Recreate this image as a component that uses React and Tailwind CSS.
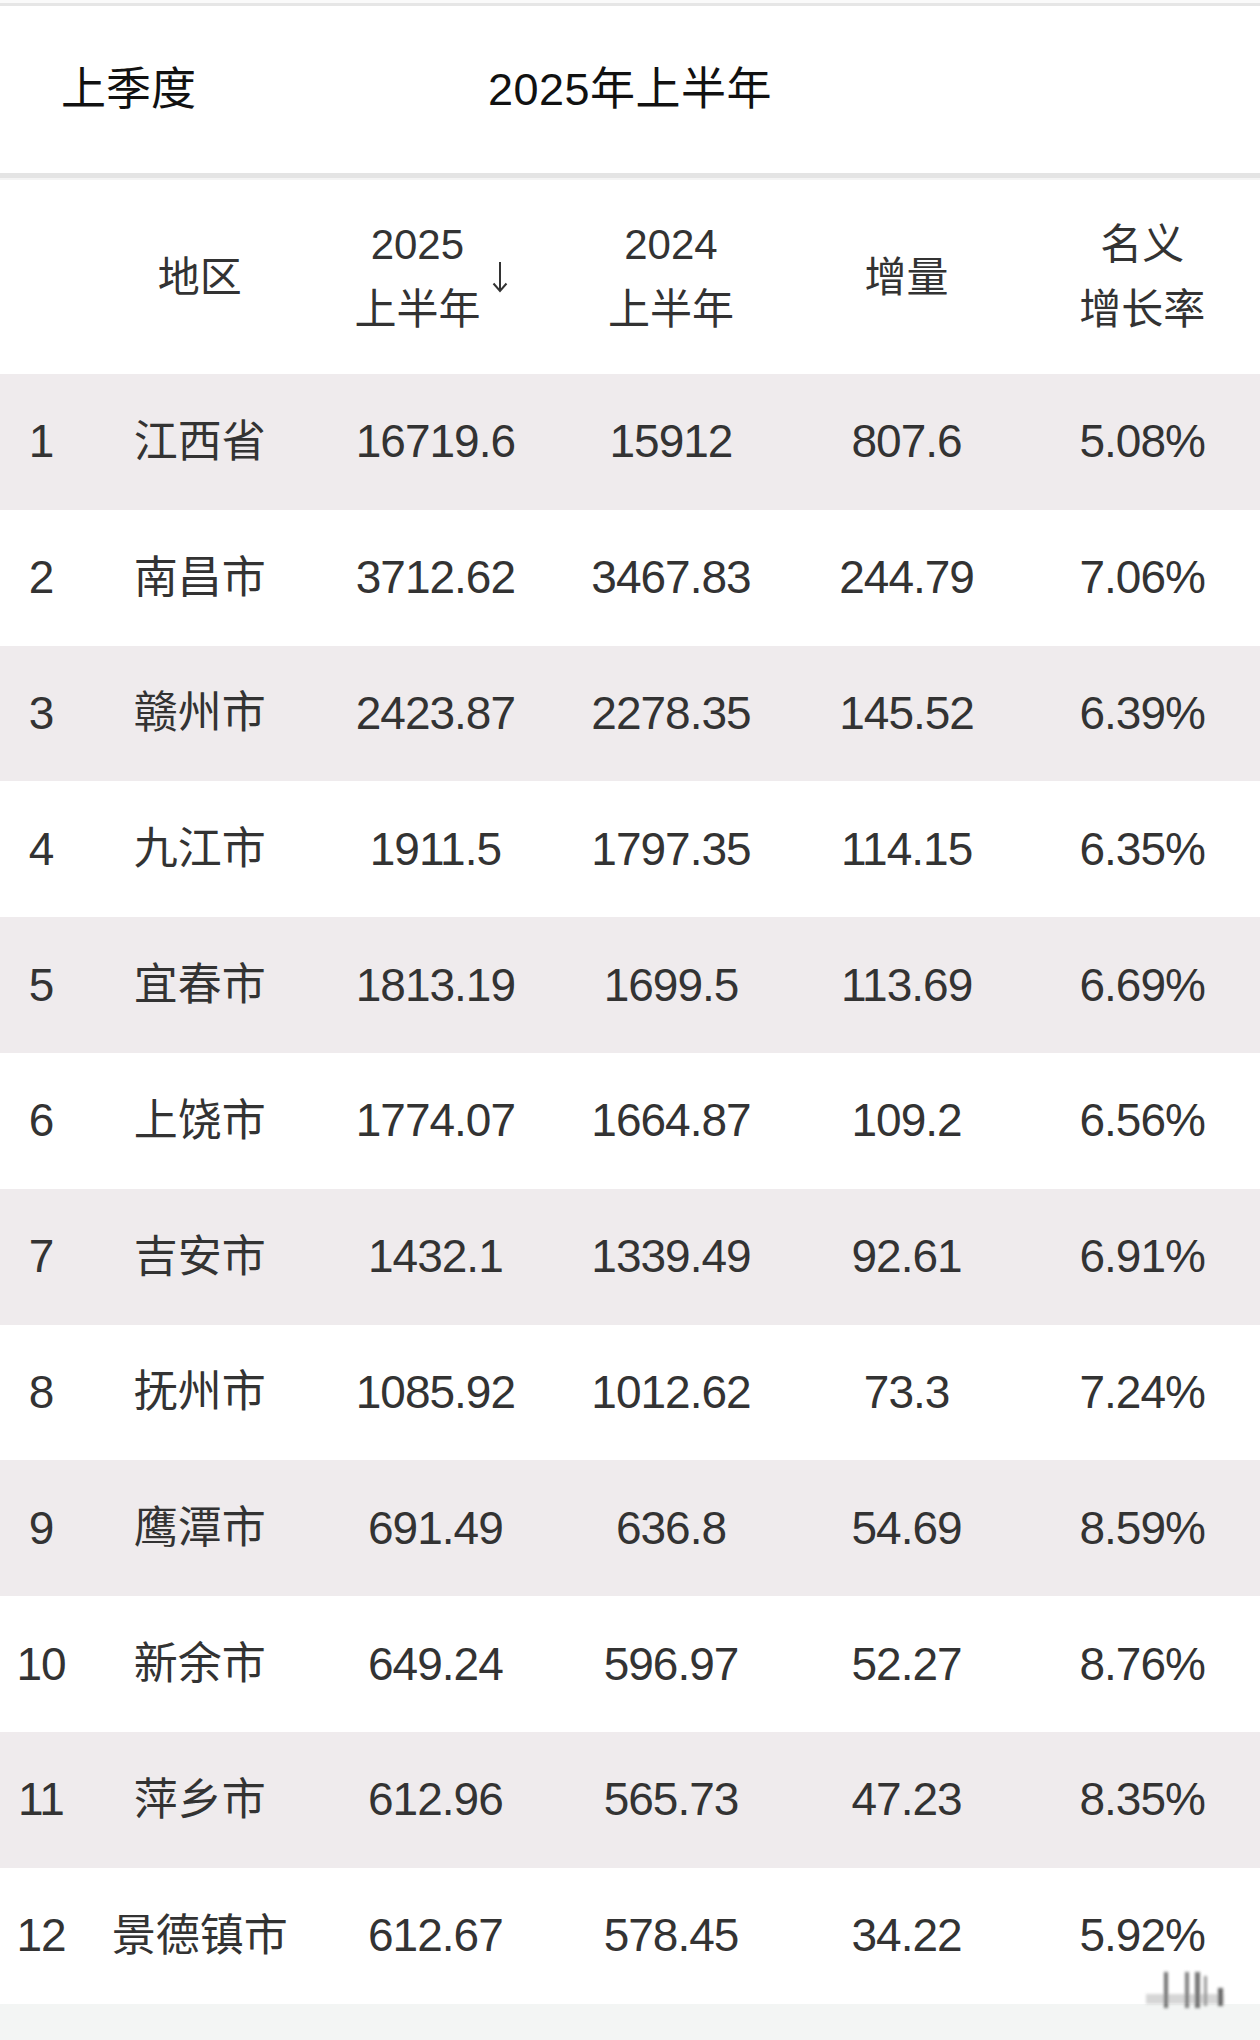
import React from 'react';

const rows = [
  ['1', '江西省', '16719.6', '15912', '807.6', '5.08%'],
  ['2', '南昌市', '3712.62', '3467.83', '244.79', '7.06%'],
  ['3', '赣州市', '2423.87', '2278.35', '145.52', '6.39%'],
  ['4', '九江市', '1911.5', '1797.35', '114.15', '6.35%'],
  ['5', '宜春市', '1813.19', '1699.5', '113.69', '6.69%'],
  ['6', '上饶市', '1774.07', '1664.87', '109.2', '6.56%'],
  ['7', '吉安市', '1432.1', '1339.49', '92.61', '6.91%'],
  ['8', '抚州市', '1085.92', '1012.62', '73.3', '7.24%'],
  ['9', '鹰潭市', '691.49', '636.8', '54.69', '8.59%'],
  ['10', '新余市', '649.24', '596.97', '52.27', '8.76%'],
  ['11', '萍乡市', '612.96', '565.73', '47.23', '8.35%'],
  ['12', '景德镇市', '612.67', '578.45', '34.22', '5.92%'],
];

const font = { fontFamily: '"Liberation Sans", "Noto Sans CJK SC", sans-serif' };

function SortArrow() {
  return (
    <svg width="16" height="32" viewBox="0 0 16 32" className="shrink-0">
      <path d="M8 1 V30 M1.5 22.5 L8 30 L14.5 22.5" fill="none" stroke="#333" strokeWidth="2" />
    </svg>
  );
}

function Watermark() {
  return (
    <svg width="90" height="50" viewBox="0 0 90 50" className="absolute right-[28px] bottom-[24px]">
      <defs>
        <filter id="wm-blur" x="-20%" y="-20%" width="140%" height="140%">
          <feGaussianBlur stdDeviation="1.6" />
        </filter>
      </defs>
      <g filter="url(#wm-blur)" opacity="0.75">
        <rect x="4" y="28" width="78" height="10" fill="#9a9a9a" opacity="0.55" />
        <rect x="22" y="6" width="4" height="36" fill="#444" />
        <rect x="43" y="6" width="4" height="36" fill="#555" />
        <rect x="53" y="6" width="5" height="36" fill="#444" />
        <rect x="62" y="10" width="3" height="30" fill="#777" />
        <rect x="76" y="22" width="5" height="18" fill="#333" />
      </g>
    </svg>
  );
}

export default function App() {
  return (
    <div className="w-[1260px] h-[2040px] bg-white text-[#333] relative overflow-hidden" style={font}>
      {/* top edge */}
      <div className="h-[3px] bg-[#fafafa]" />
      <div className="h-[3px] bg-[#e6e6e6]" />

      {/* tabs */}
      <div className="h-[167px] flex items-center text-[45px] text-[#111]">
        <span className="ml-[61px]">上季度</span>
        <span className="ml-[292px] tracking-[0.5px]">2025年上半年</span>
      </div>
      <div className="h-[5px] bg-[#e4e4e4]" />
      <div className="h-[2px] bg-[#f4f4f4]" />

      {/* header */}
      <div className="h-[194px] grid grid-cols-[82px_repeat(5,1fr)] items-center text-[42px] leading-[65px] text-center">
        <div />
        <div>地区</div>
        <div className="flex items-center justify-center gap-[12px] mr-[8px]">
          <div className="flex flex-col items-center">
            <span>2025</span>
            <span>上半年</span>
          </div>
          <SortArrow />
        </div>
        <div className="flex flex-col items-center">
          <span>2024</span>
          <span>上半年</span>
        </div>
        <div>增量</div>
        <div className="flex flex-col items-center">
          <span>名义</span>
          <span>增长率</span>
        </div>
      </div>

      {/* rows */}
      <div className="flex flex-col">
        {rows.map((r, i) => (
          <div
            key={r[0]}
            className={`h-[135.8px] grid grid-cols-[82px_repeat(5,1fr)] items-center text-center text-[46px] ${
              i % 2 === 0 ? 'bg-[#efebed]' : 'bg-white'
            }`}
          >
            <div className="tracking-[-1px]">{r[0]}</div>
            <div className="text-[44px]">{r[1]}</div>
            <div className="tracking-[-1px]">{r[2]}</div>
            <div className="tracking-[-1px]">{r[3]}</div>
            <div className="tracking-[-1px]">{r[4]}</div>
            <div className="tracking-[-1px]">{r[5]}</div>
          </div>
        ))}
      </div>

      {/* bottom strip */}
      <div className="h-[40px] bg-[#f3f5f4]" />
      <Watermark />
    </div>
  );
}
